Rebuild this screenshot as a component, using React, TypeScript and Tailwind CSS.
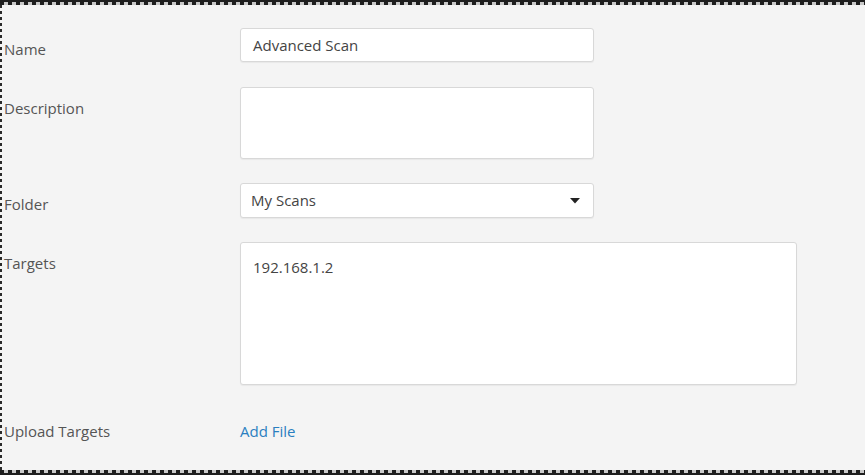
export default function App() {
  return (
    <div className="w-[865px] h-[475px] bg-[#f4f4f4] flex flex-col overflow-hidden font-['Open_Sans',sans-serif] text-[15px] text-[#555]">
      {/* top dashed edge */}
      <div className="h-[5px] shrink-0 bg-[#1e1e1e] flex flex-col justify-end">
        <div className="h-[3px] bg-[repeating-linear-gradient(90deg,#1e1e1e_0px,#1e1e1e_4px,#c8c8c8_4px,#c8c8c8_8px)]" />
      </div>

      <div className="flex-1 flex">
        {/* left dashed edge */}
        <div className="w-[2px] shrink-0 bg-[repeating-linear-gradient(180deg,#2a2a2a_0px,#2a2a2a_3px,#f4f4f4_3px,#f4f4f4_6px)]" />

        <div className="flex-1 pl-[2px] pt-[23px] flex flex-col">
          <div className="flex">
            <div className="w-[236px] pt-[11px] leading-[20px]">Name</div>
            <div className="w-[354px] h-[34px] bg-white border border-[#d8d8d8] rounded-[3px] shadow-[0_1px_1px_rgba(0,0,0,0.05)] px-[12px] flex items-center text-[#444]">
              Advanced Scan
            </div>
          </div>

          <div className="flex mt-[25px]">
            <div className="w-[236px] pt-[11px] leading-[20px]">Description</div>
            <div className="w-[354px] h-[72px] bg-white border border-[#d8d8d8] rounded-[3px] shadow-[0_1px_1px_rgba(0,0,0,0.05)]" />
          </div>

          <div className="flex mt-[24px]">
            <div className="w-[236px] pt-[11px] leading-[20px]">Folder</div>
            <div className="w-[354px] h-[35px] bg-white border border-[#d8d8d8] rounded-[3px] shadow-[0_1px_1px_rgba(0,0,0,0.05)] pl-[10px] pr-[13px] flex items-center justify-between text-[#444]">
              <span>My Scans</span>
              <svg width="10" height="6" viewBox="0 0 10 6">
                <path d="M0 0 L10 0 L5 5.5 Z" fill="#222" />
              </svg>
            </div>
          </div>

          <div className="flex mt-[24px]">
            <div className="w-[236px] pt-[11px] leading-[20px]">Targets</div>
            <div className="w-[557px] h-[143px] bg-white border border-[#d8d8d8] rounded-[3px] shadow-[0_1px_1px_rgba(0,0,0,0.05)] px-[12px] pt-[14px] leading-[20px] text-[#444]">
              192.168.1.2
            </div>
          </div>

          <div className="flex mt-[36px] leading-[20px]">
            <div className="w-[236px]">Upload Targets</div>
            <div className="text-[#2a7fc0]">Add File</div>
          </div>
        </div>
      </div>

      {/* bottom dashed edge */}
      <div className="h-[5px] shrink-0 bg-[#1e1e1e] flex flex-col justify-start">
        <div className="h-[3px] bg-[repeating-linear-gradient(90deg,#1e1e1e_0px,#1e1e1e_4px,#c8c8c8_4px,#c8c8c8_8px)]" />
      </div>
    </div>
  );
}
